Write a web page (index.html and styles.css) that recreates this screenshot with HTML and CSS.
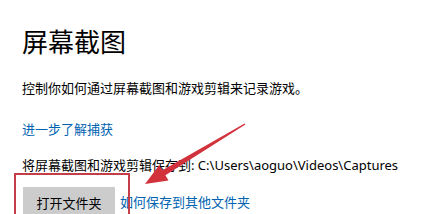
FILE: index.html
```html
<!DOCTYPE html>
<html lang="zh-CN">
<head>
    <meta charset="UTF-8">
    <title>屏幕截图</title>
    <link rel="stylesheet" href="styles.css">
</head>
<body>
    <div class="page">
        <h1 class="title">屏幕截图</h1>
        <p class="desc">控制你如何通过屏幕截图和游戏剪辑来记录游戏。</p>
        <a class="link learn" href="#">进一步了解捕获</a>
        <p class="path">将屏幕截图和游戏剪辑保存到: C:\Users\aoguo\Videos\Captures</p>
        <div class="actions">
            <button class="btn" type="button">打开文件夹</button>
            <a class="link" href="#">如何保存到其他文件夹</a>
        </div>

        <!-- annotation: red box + arrow -->
        <div class="mark-box"></div>
        <svg class="mark-arrow" width="424" height="214" viewBox="0 0 424 214">
            <polygon fill="#d2323c" points="245.4,124.6 244.6,123.4 162.4,170.2 159.3,165.0 145,184 168.5,180.4 165.4,175.2"/>
        </svg>
    </div>
</body>
</html>
```

FILE: styles.css
```css
body {
    margin: 0;
    background: #ffffff;
    font-family: "Noto Sans", "Noto Sans CJK SC", sans-serif;
    color: #000000;
}

.page {
    position: relative;
    width: 424px;
    height: 214px;
    overflow: hidden;
    padding-left: 22px;
    box-sizing: border-box;
}

.title {
    margin: 0;
    padding-top: 24px;
    font-size: 26px;
    font-weight: normal;
    line-height: 36px;
}

.desc {
    margin: 18px 0 0;
    font-size: 13px;
    line-height: 20px;
}

.link {
    color: #0063b1;
    text-decoration: none;
    font-size: 13px;
    line-height: 20px;
}

.learn {
    display: block;
    margin-top: 21px;
}

.path {
    margin: 16px 0 0;
    font-size: 13px;
    line-height: 20px;
}

.actions {
    display: flex;
    align-items: center;
    gap: 5px;
    margin-top: 12px;
}

.btn {
    margin-left: 1px;
    width: 92px;
    height: 30px;
    border: none;
    background: #cccccc;
    font-family: inherit;
    font-size: 13px;
    color: #000000;
    padding: 0;
}

.mark-box {
    position: absolute;
    left: 14px;
    top: 173px;
    width: 112px;
    height: 60px;
    border: 2px solid #c43e4a;
}

.mark-arrow {
    position: absolute;
    left: 0;
    top: 0;
}
```
